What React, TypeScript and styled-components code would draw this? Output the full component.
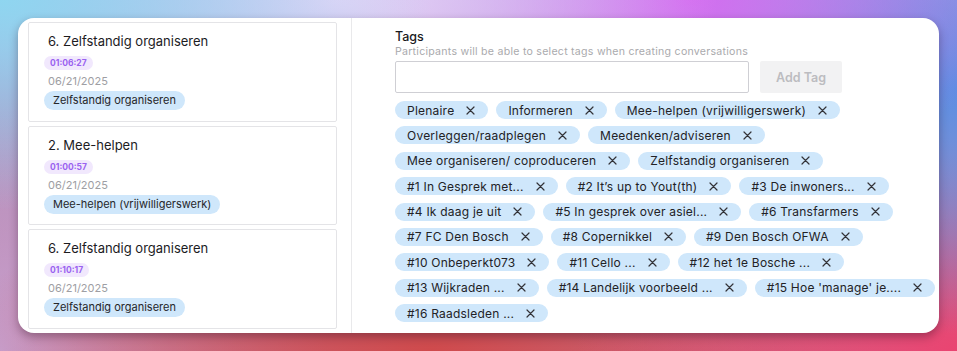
import React from "react";
import styled, { createGlobalStyle } from "styled-components";

const Global = createGlobalStyle`
  html, body { margin: 0; padding: 0; }
  body {
    width: 957px;
    height: 351px;
    overflow: hidden;
    font-family: Inter, "Noto Sans", sans-serif;
    background:
      radial-gradient(ellipse 45% 60% at 0% 0%, #8fd6f0 0%, rgba(143,214,240,0) 100%),
      radial-gradient(ellipse 40% 45% at 35% 0%, #ead4f7 0%, rgba(234,212,247,0) 100%),
      radial-gradient(ellipse 35% 50% at 72% 0%, #d36cf0 0%, rgba(211,108,240,0) 100%),
      radial-gradient(ellipse 30% 70% at 100% 25%, #5b8ee2 0%, rgba(91,142,226,0) 100%),
      radial-gradient(ellipse 40% 60% at 100% 100%, #ea4471 0%, rgba(234,68,113,0) 100%),
      radial-gradient(ellipse 50% 50% at 45% 100%, #cf4a4c 0%, rgba(207,74,76,0) 100%),
      radial-gradient(ellipse 35% 70% at 0% 100%, #c6a5d6 0%, rgba(198,165,214,0) 100%),
      linear-gradient(180deg, #a9a8e0 0%, #c2728f 100%);
  }
`;

const Page = styled.div`
  box-sizing: border-box;
  height: 351px;
  padding: 18px;
`;

const Card = styled.div`
  height: 315px;
  background: #fff;
  border-radius: 16px;
  overflow: hidden;
  display: grid;
  grid-template-columns: 334px minmax(0, 1fr);
  box-shadow: 0 4px 10px rgba(40, 10, 30, 0.35);
`;

const Sidebar = styled.div`
  border-right: 1px solid #e9e9eb;
  padding: 4px 14px 0 10px;
  display: flex;
  flex-direction: column;
  gap: 4px;
  overflow: hidden;
`;

const Session = styled.div`
  flex-shrink: 0;
  box-sizing: border-box;
  height: 99.5px;
  border: 1px solid #e4e4e7;
  border-radius: 2px;
  padding: 10px 15px 0 15px;
  display: flex;
  flex-direction: column;
  align-items: flex-start;
`;

const SessionTitle = styled.div`
  padding-left: 4px;
  font-size: 13px;
  line-height: 16px;
  color: #1c1c1f;
`;

const Duration = styled.span`
  margin-top: 7px;
  padding: 0 6px;
  height: 14px;
  line-height: 14px;
  border-radius: 7px;
  background: #f1e8fd;
  color: #9a62f0;
  font-size: 8.5px;
  font-weight: 700;
`;

const DateText = styled.div`
  margin-top: 4px;
  padding-left: 4px;
  font-size: 11px;
  line-height: 14px;
  color: #9e9ea3;
`;

const SessionTag = styled.span`
  margin-top: 3px;
  height: 19px;
  line-height: 19px;
  padding: 0 9px;
  border-radius: 10px;
  background: #cfe7fb;
  color: #26262a;
  font-size: 11px;
`;

const Main = styled.div`
  padding: 11px 0 0 43px;
  display: flex;
  flex-direction: column;
  align-items: flex-start;
`;

const Label = styled.div`
  font-size: 12.5px;
  font-weight: 500;
  line-height: 16px;
  color: #1a1a1d;
`;

const Help = styled.div`
  font-size: 10.6px;
  letter-spacing: 0.25px;
  line-height: 14px;
  color: #aaaaad;
`;

const InputRow = styled.div`
  margin-top: 2px;
  display: flex;
  gap: 11px;
`;

const TagInput = styled.input`
  box-sizing: border-box;
  width: 354px;
  height: 32px;
  border: 1px solid #cfcfd4;
  border-radius: 2px;
  outline: none;
  padding: 0 8px;
  font: inherit;
`;

const AddButton = styled.button`
  width: 82px;
  height: 32px;
  border: none;
  border-radius: 2px;
  background: #f2f2f3;
  color: #bcbcc0;
  font-family: inherit;
  font-size: 12.5px;
  font-weight: 600;
`;

const Chips = styled.div`
  align-self: stretch;
  margin-top: 8px;
  display: flex;
  flex-wrap: wrap;
  align-content: flex-start;
  column-gap: 8px;
  row-gap: 7.4px;
`;

const Chip = styled.span`
  display: inline-flex;
  align-items: center;
  gap: 12px;
  height: 18px;
  padding: 0 13px 0 12px;
  border-radius: 9px;
  background: #cfe7fb;
  color: #222226;
  font-size: 12px;
  letter-spacing: 0.22px;
  white-space: nowrap;
`;

const RemoveIcon = () => (
  <svg width="9" height="9" viewBox="0 0 9 9" aria-hidden="true">
    <path d="M1 1L8 8M8 1L1 8" stroke="#333338" strokeWidth="1.2" strokeLinecap="round" />
  </svg>
);

const sessions = [
  { title: "6. Zelfstandig organiseren", time: "01:06:27", date: "06/21/2025", tag: "Zelfstandig organiseren" },
  { title: "2. Mee-helpen", time: "01:00:57", date: "06/21/2025", tag: "Mee-helpen (vrijwilligerswerk)" },
  { title: "6. Zelfstandig organiseren", time: "01:10:17", date: "06/21/2025", tag: "Zelfstandig organiseren" },
];

const tags = [
  "Plenaire",
  "Informeren",
  "Mee-helpen (vrijwilligerswerk)",
  "Overleggen/raadplegen",
  "Meedenken/adviseren",
  "Mee organiseren/ coproduceren",
  "Zelfstandig organiseren",
  "#1 In Gesprek met...",
  "#2 It\u2019s up to Yout(th)",
  "#3 De inwoners...",
  "#4 Ik daag je uit",
  "#5 In gesprek over asiel...",
  "#6 Transfarmers",
  "#7 FC Den Bosch",
  "#8 Copernikkel",
  "#9 Den Bosch OFWA",
  "#10 Onbeperkt073",
  "#11 Cello ...",
  "#12 het 1e Bosche ...",
  "#13 Wijkraden ...",
  "#14 Landelijk voorbeeld ...",
  "#15 Hoe 'manage' je....",
  "#16 Raadsleden ...",
];

export default function App() {
  return (
    <>
      <Global />
      <Page>
        <Card>
          <Sidebar>
            {sessions.map((s, i) => (
              <Session key={i}>
                <SessionTitle>{s.title}</SessionTitle>
                <Duration>{s.time}</Duration>
                <DateText>{s.date}</DateText>
                <SessionTag>{s.tag}</SessionTag>
              </Session>
            ))}
          </Sidebar>
          <Main>
            <Label>Tags</Label>
            <Help>Participants will be able to select tags when creating conversations</Help>
            <InputRow>
              <TagInput type="text" />
              <AddButton type="button">Add Tag</AddButton>
            </InputRow>
            <Chips>
              {tags.map((t) => (
                <Chip key={t}>
                  {t}
                  <RemoveIcon />
                </Chip>
              ))}
            </Chips>
          </Main>
        </Card>
      </Page>
    </>
  );
}
